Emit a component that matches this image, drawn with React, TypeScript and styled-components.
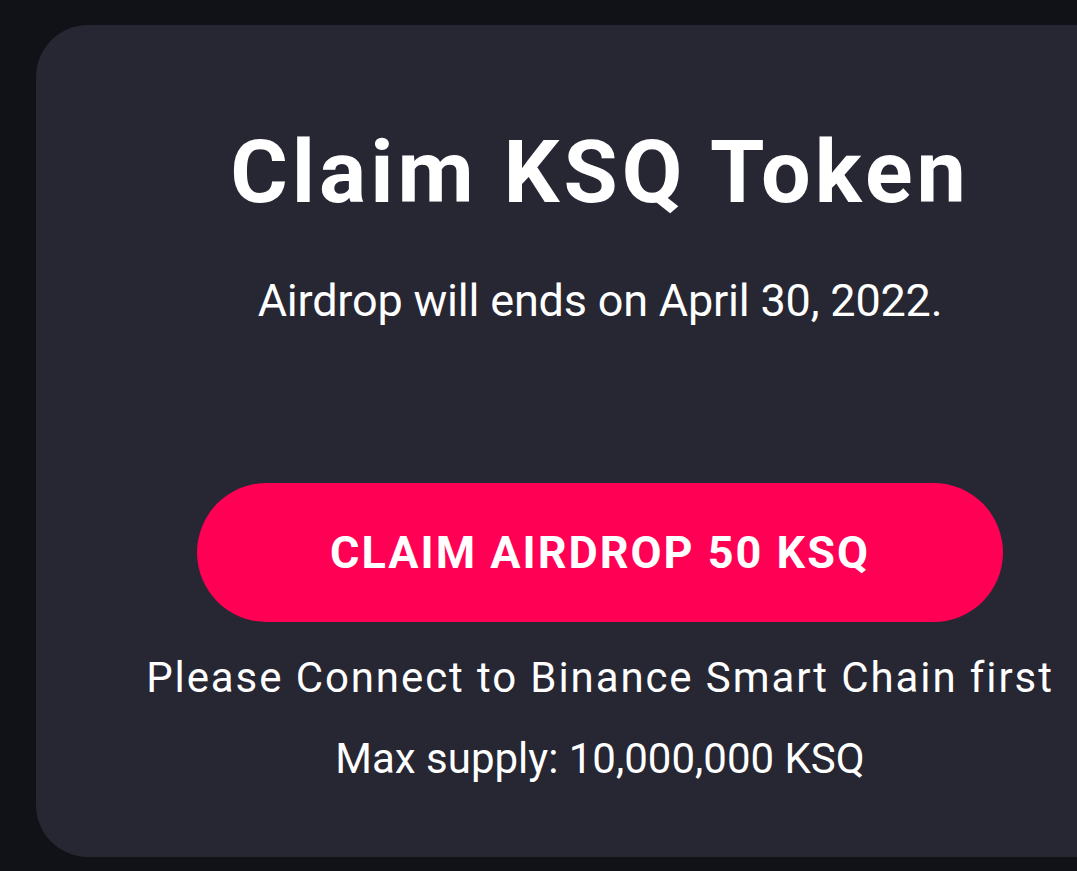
import React from "react";
import styled, {createGlobalStyle} from "styled-components";

const Global = createGlobalStyle`
  html, body {
    margin: 0;
    background: #101217;
    overflow: hidden;
  }
  body {
    font-family: "Roboto", "Open Sans", sans-serif;
    color: #ffffff;
  }
`;

const Page = styled.div`
  padding: 25px 0 0 36px;
  width: 1077px;
  height: 871px;
  box-sizing: border-box;
  overflow: hidden;
`;

const Card = styled.section`
  width: 1128px;
  height: 832px;
  box-sizing: border-box;
  padding-top: 97px;
  background: #272633;
  border-radius: 52px;
  display: flex;
  flex-direction: column;
  align-items: center;
`;

const Title = styled.h1`
  margin: 0;
  font-size: 88px;
  line-height: 100px;
  font-weight: 700;
  letter-spacing: 4px;
`;

const Subtitle = styled.p`
  margin: 49px 0 0;
  font-size: 45px;
  line-height: 60px;
  font-weight: 400;
  letter-spacing: -0.2px;
`;

const ClaimButton = styled.button`
  margin-top: 152px;
  width: 806px;
  height: 139px;
  border: none;
  border-radius: 70px;
  background: #ff0055;
  color: #ffffff;
  font-family: inherit;
  font-size: 45px;
  font-weight: 700;
  letter-spacing: 2px;
  cursor: pointer;
`;

const Note = styled.p<{$gap: number; $spacing?: number}>`
  margin: ${(p) => p.$gap}px 0 0;
  font-size: 42px;
  line-height: 56px;
  font-weight: 400;
  letter-spacing: ${(p) => p.$spacing ?? 0}px;
  white-space: nowrap;
`;

export default function App() {
    return (
        <>
            <Global />
            <Page>
                <Card>
                    <Title>Claim KSQ Token</Title>
                    <Subtitle>Airdrop will ends on April 30, 2022.</Subtitle>
                    <ClaimButton>CLAIM AIRDROP 50 KSQ</ClaimButton>
                    <Note $gap={28} $spacing={1.9}>
                        Please Connect to Binance Smart Chain first
                    </Note>
                    <Note $gap={25}>Max supply: 10,000,000 KSQ</Note>
                </Card>
            </Page>
        </>
    );
}
